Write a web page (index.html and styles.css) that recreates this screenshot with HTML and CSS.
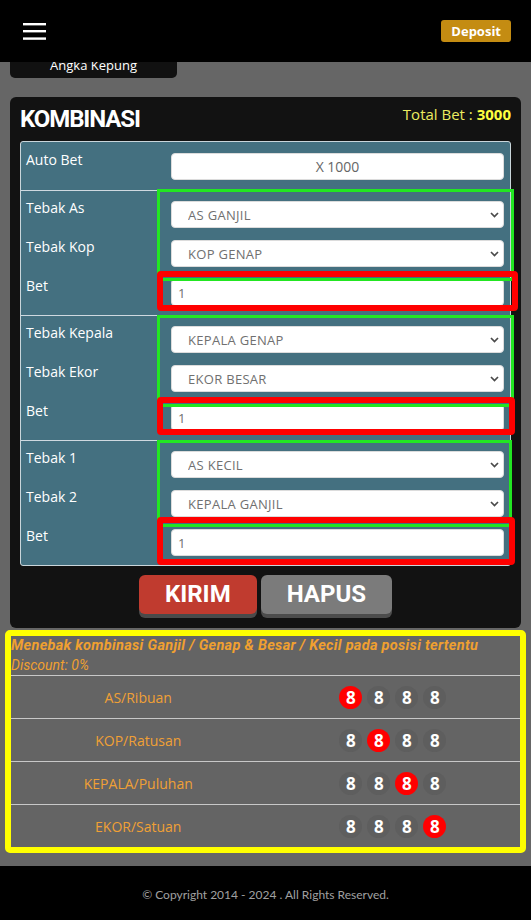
FILE: index.html
```html
<!DOCTYPE html>
<html lang="id">
<head>
<meta charset="utf-8">
<meta name="viewport" content="width=device-width, initial-scale=1">
<title>Kombinasi</title>
<link rel="stylesheet" href="styles.css">
</head>
<body>
<header class="topbar">
  <button class="menu-btn" aria-label="Menu">
    <svg width="23" height="17" viewBox="0 0 23 17"><rect x="0" y="0" width="23" height="2.4" fill="#fff"/><rect x="0" y="7" width="23" height="2.4" fill="#fff"/><rect x="0" y="14.4" width="23" height="2.4" fill="#fff"/></svg>
  </button>
  <a class="deposit" href="#">Deposit</a>
</header>

<nav class="tab"><span>Angka Kepung</span></nav>

<main class="panel">
  <div class="panel-head">
    <h1>KOMBINASI</h1>
    <div class="total">Total Bet : <b>3000</b></div>
  </div>

  <div class="form-table">
    <div class="frow frow-first">
      <div class="labels"><span>Auto Bet</span></div>
      <div class="controls"><input class="ctl ctl-center" value="X 1000" readonly></div>
    </div>

    <div class="frow">
      <div class="labels"><span>Tebak As</span><span>Tebak Kop</span><span>Bet</span></div>
      <div class="controls">
        <div class="sel"><select class="ctl"><option>AS GANJIL</option></select><svg class="chev" viewBox="0 0 9 6"><path d="M1 1l3.5 3.5L8 1"/></svg></div>
        <div class="sel"><select class="ctl"><option>KOP GENAP</option></select><svg class="chev" viewBox="0 0 9 6"><path d="M1 1l3.5 3.5L8 1"/></svg></div>
        <input class="ctl" value="1">
      </div>
      <div class="mark-green mg-1"></div>
      <div class="mark-red mr-1"></div>
    </div>

    <div class="frow">
      <div class="labels"><span>Tebak Kepala</span><span>Tebak Ekor</span><span>Bet</span></div>
      <div class="controls">
        <div class="sel"><select class="ctl"><option>KEPALA GENAP</option></select><svg class="chev" viewBox="0 0 9 6"><path d="M1 1l3.5 3.5L8 1"/></svg></div>
        <div class="sel"><select class="ctl"><option>EKOR BESAR</option></select><svg class="chev" viewBox="0 0 9 6"><path d="M1 1l3.5 3.5L8 1"/></svg></div>
        <input class="ctl" value="1">
      </div>
      <div class="mark-green mg-2"></div>
      <div class="mark-red mr-2"></div>
    </div>

    <div class="frow">
      <div class="labels"><span>Tebak 1</span><span>Tebak 2</span><span>Bet</span></div>
      <div class="controls">
        <div class="sel"><select class="ctl"><option>AS KECIL</option></select><svg class="chev" viewBox="0 0 9 6"><path d="M1 1l3.5 3.5L8 1"/></svg></div>
        <div class="sel"><select class="ctl"><option>KEPALA GANJIL</option></select><svg class="chev" viewBox="0 0 9 6"><path d="M1 1l3.5 3.5L8 1"/></svg></div>
        <input class="ctl" value="1">
      </div>
      <div class="mark-green mg-3"></div>
      <div class="mark-red mr-3"></div>
    </div>
  </div>

  <div class="actions">
    <button class="btn btn-red">KIRIM</button>
    <button class="btn btn-gray">HAPUS</button>
  </div>
</main>

<section class="info">
  <div class="info-head">
    <div class="info-title">Menebak kombinasi Ganjil / Genap &amp; Besar / Kecil pada posisi tertentu</div>
    <div class="info-disc">Discount: 0%</div>
  </div>
  <div class="info-row">
    <div class="pos">AS/Ribuan</div>
    <div class="digits"><span class="d on">8</span><span class="d">8</span><span class="d">8</span><span class="d">8</span></div>
  </div>
  <div class="info-row">
    <div class="pos">KOP/Ratusan</div>
    <div class="digits"><span class="d">8</span><span class="d on">8</span><span class="d">8</span><span class="d">8</span></div>
  </div>
  <div class="info-row">
    <div class="pos">KEPALA/Puluhan</div>
    <div class="digits"><span class="d">8</span><span class="d">8</span><span class="d on">8</span><span class="d">8</span></div>
  </div>
  <div class="info-row">
    <div class="pos">EKOR/Satuan</div>
    <div class="digits"><span class="d">8</span><span class="d">8</span><span class="d">8</span><span class="d on">8</span></div>
  </div>
</section>

<footer class="footer">© Copyright 2014 - 2024 . All Rights Reserved.</footer>
</body>
</html>
```

FILE: styles.css
```css
body {
  margin: 0;
  background: #666666;
  font-family: "Open Sans", "Noto Sans", sans-serif;
}

/* Top bar */
.topbar {
  height: 62px;
  background: #000;
  display: flex;
  align-items: center;
  justify-content: space-between;
  padding: 0 20px 0 23px;
  box-sizing: border-box;
}
.menu-btn {
  background: none;
  border: 0;
  padding: 0;
  width: 23px;
  height: 17px;
  display: block;
}
.menu-btn svg { display: block; }
.deposit {
  display: block;
  height: 22px;
  padding: 0 10px;
  background: #c48c12;
  color: #fff;
  font-weight: 700;
  font-size: 13px;
  line-height: 22px;
  border-radius: 3px;
  text-decoration: none;
}

/* Tab */
.tab {
  margin-left: 10px;
  width: 167px;
  height: 16px;
  background: #111;
  border-radius: 0 0 5px 5px;
  overflow: hidden;
  color: #fff;
  font-size: 13px;
  text-align: center;
}
.tab span {
  display: block;
  line-height: 16px;
  margin-top: -5px;
}

/* Panel */
.panel {
  margin: 19px 10px 0;
  background: #121212;
  border-radius: 6px;
  padding: 0 10px 10px;
}
.panel-head {
  height: 44px;
  box-sizing: border-box;
  padding-top: 8px;
  display: flex;
  justify-content: space-between;
  align-items: flex-start;
}
.panel-head h1 {
  margin: 0;
  font-family: Roboto, sans-serif;
  font-weight: 700;
  font-size: 24px;
  line-height: 28px;
  letter-spacing: -1.1px;
  color: #fff;
}
.total {
  font-size: 15px;
  line-height: 18px;
  color: #ecec60;
}
.total b { color: #ffff40; }

/* Form table */
.form-table {
  position: relative;
  border: 1px solid #c9d5da;
  border-radius: 3px;
  background: #447080;
}
.frow {
  position: relative;
  display: flex;
  padding: 10px 6px 9px 0;
  border-top: 1px solid #cfd9e0;
}
.frow-first {
  border-top: 0;
  padding: 11px 6px 10px 0;
}
.labels {
  width: 150px;
  flex: none;
  box-sizing: border-box;
  padding-left: 5px;
  margin-top: -3px;
  display: flex;
  flex-direction: column;
  gap: 19px;
  color: #fff;
  font-size: 14px;
  line-height: 20px;
}
.controls {
  flex: 1;
  display: flex;
  flex-direction: column;
  gap: 12px;
}
.ctl {
  display: block;
  width: 100%;
  height: 27px;
  box-sizing: border-box;
  border: 1px solid #dcdcdc;
  border-radius: 4px;
  background: #fff;
  font-family: "Open Sans", sans-serif;
  font-size: 13px;
  color: #707070;
  padding: 0 6px;
  margin: 0;
  outline: none;
}
.ctl-center {
  text-align: center;
  font-size: 14px;
  color: #666;
}
.sel { position: relative; }
select.ctl {
  -webkit-appearance: none;
  appearance: none;
  padding-left: 16px;
  letter-spacing: 0.3px;
}
.chev {
  position: absolute;
  right: 5px;
  top: 11px;
  width: 9px;
  height: 6px;
  fill: none;
  stroke: #4a4a4a;
  stroke-width: 1.7;
  pointer-events: none;
}

/* Annotation frames drawn over the form */
.mark-green {
  position: absolute;
  left: 136px;
  border: 3px solid #22e622;
  box-sizing: border-box;
}
.mg-1 { top: -2px; width: 357px; height: 92px; }
.mg-2 { top: -1px; width: 357px; height: 92px; }
.mg-3 { top: -1px; width: 355px; height: 87px; }
.mark-red {
  position: absolute;
  left: 136px;
  border: 6px solid #ff0000;
  border-radius: 4px;
  box-sizing: border-box;
}
.mr-1 { top: 80px; width: 361px; height: 40px; }
.mr-2 { top: 81px; width: 358px; height: 38px; }
.mr-3 { top: 76px; width: 358px; height: 48px; }

/* Buttons */
.actions {
  display: flex;
  justify-content: center;
  gap: 4px;
  margin-top: 9px;
  padding-bottom: 4px;
}
.btn {
  height: 39px;
  padding: 0 26px;
  border: 0;
  border-radius: 6px;
  font-family: Roboto, sans-serif;
  font-weight: 700;
  font-size: 24px;
  line-height: 39px;
  color: #fff;
}
.btn-red {
  background: #c03b2f;
  box-shadow: 0 4px 0 #4a4a4a;
}
.btn-gray {
  background: #7b7b7b;
  box-shadow: 0 4px 0 #4c4c4c;
}

/* Info box */
.info {
  margin: 2px 5px 0;
  border: 6px solid #ffff00;
  border-radius: 5px;
  background: #646464;
}
.info-head {
  color: #f0a030;
  font-size: 14px;
  line-height: 19.5px;
}
.info-title {
  font-family: Roboto, sans-serif;
  font-weight: 700;
  font-style: italic;
  font-size: 14.5px;
  letter-spacing: 0.3px;
  white-space: nowrap;
}
.info-disc {
  font-family: Roboto, sans-serif;
  font-style: italic;
  font-size: 14px;
}
.info-row {
  display: flex;
  align-items: center;
  height: 43px;
  box-sizing: border-box;
  border-top: 1px solid #c8c8c8;
}
.pos {
  width: 50%;
  text-align: center;
  color: #f0a035;
  font-size: 14px;
}
.digits {
  width: 50%;
  display: flex;
  justify-content: center;
  gap: 5px;
}
.d {
  width: 23px;
  height: 23px;
  border-radius: 50%;
  background: #5e5e5e;
  color: #fff;
  font-weight: 700;
  font-size: 17px;
  line-height: 23px;
  text-align: center;
}
.d.on { background: #ff0000; }

/* Footer */
.footer {
  margin-top: 13px;
  background: #000;
  color: #a0a0a0;
  text-align: center;
  font-family: Lato, sans-serif;
  font-size: 12px;
  line-height: 18px;
  padding: 20px 0 22px;
}
```
